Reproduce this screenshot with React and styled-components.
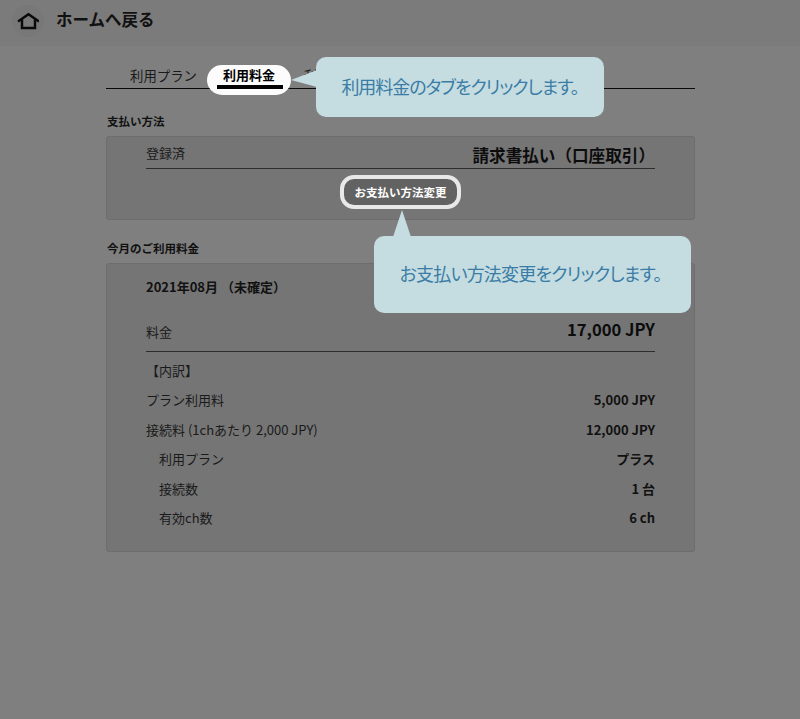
import React from "react";
import styled, { createGlobalStyle } from "styled-components";

const Global = createGlobalStyle`
  html, body { margin: 0; padding: 0; background: #7f7f7f; }
  body { font-family: "Noto Sans CJK JP", "Noto Sans", sans-serif; color: #0c0c0c; }
  #root { min-height: 719px; }
`;

const Page = styled.div`
  position: relative;
  width: 800px;
  height: 719px;
  overflow: hidden;
  background: #7f7f7f;
`;

const Header = styled.header`
  height: 46px;
  display: flex;
  align-items: center;
  padding: 0 0 5px 12px;
  gap: 12px;
  background: #7b7b7b;
  box-sizing: border-box;
`;

const HomeButton = styled.div`
  width: 32px;
  height: 32px;
  border-radius: 50%;
  background: #787878;
  display: flex;
  align-items: center;
  justify-content: center;
`;

const HeaderTitle = styled.span`
  font-size: 16.5px;
  font-weight: 700;
  color: #111;
  line-height: 20px;
  margin-top: -3px;
`;

const Main = styled.main`
  width: 589px;
  margin: 0 0 0 106px;
`;

const Tabs = styled.nav`
  height: 42px;
  border-bottom: 1px solid #0a0a0a;
  display: flex;
  align-items: flex-start;
  padding-left: 24px;
`;

const Tab = styled.div`
  position: relative;
  font-size: ${(p) => (p.$active ? 13 : 13.4)}px;
  line-height: 20px;
  margin-top: 19px;
  margin-left: ${(p) => p.$gap || 0}px;
  width: ${(p) => p.$w}px;
  flex: none;
  text-align: ${(p) => (p.$active ? "center" : "left")};
  font-weight: ${(p) => (p.$active ? 700 : 400)};
  color: ${(p) => (p.$active ? "#000" : "#1a1a1a")};
  z-index: ${(p) => (p.$active ? 1 : 0)};
  &::before {
    content: ${(p) => (p.$active ? '""' : "none")};
    position: absolute;
    inset: 0 0 -10px 0;
    border-radius: 15px;
    background: #fcfcfc;
    z-index: -1;
  }
  &::after {
    content: ${(p) => (p.$active ? '""' : "none")};
    position: absolute;
    left: 10px;
    right: 8px;
    top: 20px;
    height: 4px;
    background: #000;
  }
`;

const SectionTitle = styled.h2`
  margin: 0;
  font-size: 11.5px;
  font-weight: 700;
  line-height: 16px;
  color: #111;
  padding-left: 1px;
  padding-top: ${(p) => p.$top}px;
  padding-bottom: ${(p) => p.$bottom}px;
`;

const Card = styled.section`
  background: #757575;
  border: 1px solid #6d6d6d;
  border-radius: 3px;
  box-sizing: border-box;
  height: ${(p) => p.$h}px;
  padding: 0 39px;
`;

const MethodRow = styled.div`
  height: 31px;
  display: flex;
  justify-content: space-between;
  align-items: center;
  border-bottom: 1px solid #2d2d2d;
`;

const Label = styled.span`
  font-size: 13px;
  color: #1a1a1a;
  padding-left: ${(p) => (p.$indent ? 13 : 0)}px;
  margin-top: ${(p) => p.$shift || 0}px;
`;

const MethodValue = styled.strong`
  font-size: 16.6px;
  font-weight: 700;
  color: #0c0c0c;
  margin-top: 4px;
`;

const ButtonRow = styled.div`
  display: flex;
  justify-content: center;
  padding-top: 6px;
`;

const ChangeButton = styled.button`
  width: 121px;
  height: 34px;
  box-sizing: border-box;
  border: 4px solid #e8e8e8;
  border-radius: 14px;
  background: #626262;
  color: #fff;
  font-family: inherit;
  font-size: 11.5px;
  font-weight: 700;
  padding: 0;
`;

const Period = styled.div`
  font-size: 13px;
  font-weight: 700;
  line-height: 20px;
  padding-top: 13px;
  color: #111;
`;

const TotalRow = styled.div`
  display: flex;
  justify-content: space-between;
  align-items: center;
  height: 45px;
  margin-top: 10px;
  border-bottom: 1px solid #2d2d2d;
  box-sizing: border-box;
`;

const TotalValue = styled.strong`
  font-size: 16.6px;
  font-weight: 700;
  color: #0c0c0c;
`;

const Breakdown = styled.div`
  font-size: 13px;
  line-height: 18px;
  color: #1a1a1a;
  padding: 4px 0 8px;
`;

const Row = styled.div`
  display: flex;
  justify-content: space-between;
  align-items: center;
  height: 29.5px;
`;

const Value = styled.span`
  font-size: 13px;
  font-weight: 700;
  color: #111;
`;

const Callout = styled.div`
  position: absolute;
  left: ${(p) => p.$x}px;
  top: ${(p) => p.$y}px;
  width: ${(p) => p.$w}px;
  height: ${(p) => p.$h}px;
  background: #c5dce1;
  border-radius: 10px;
  display: flex;
  align-items: center;
  justify-content: center;
  color: #3a7ca5;
  font-size: 18px;
  letter-spacing: ${(p) => p.$ls}px;
  font-feature-settings: "palt";
  white-space: nowrap;
  padding-bottom: ${(p) => p.$pb}px;
  padding-right: ${(p) => p.$pr || 0}px;
  box-sizing: border-box;
  z-index: 5;
`;

const Pointer = styled.svg`
  position: absolute;
  left: ${(p) => p.$x}px;
  top: ${(p) => p.$y}px;
  z-index: 5;
`;

export default function App() {
  return (
    <Page>
      <Global />
      <Header>
        <HomeButton>
          <svg width="22" height="20" viewBox="0 0 22 20" fill="none" stroke="#0a0a0a" strokeWidth="2.5">
            <path d="M1 10.5 L11.5 3.2 L22 10.5" />
            <path d="M5 8.5 V17 H18 V8.5" />
          </svg>
        </HomeButton>
        <HeaderTitle>ホームへ戻る</HeaderTitle>
      </Header>
      <Main>
        <Tabs>
          <Tab $w={77}>利用プラン</Tab>
          <Tab $active $w={84}>利用料金</Tab>
          <Tab $w={80} $gap={13}>利用履歴</Tab>
        </Tabs>
        <SectionTitle $top={24} $bottom={7}>支払い方法</SectionTitle>
        <Card $h={84}>
          <MethodRow>
            <Label>登録済</Label>
            <MethodValue>請求書払い（口座取引）</MethodValue>
          </MethodRow>
          <ButtonRow>
            <ChangeButton>お支払い方法変更</ChangeButton>
          </ButtonRow>
        </Card>
        <SectionTitle $top={20} $bottom={7}>今月のご利用料金</SectionTitle>
        <Card $h={289}>
          <Period>2021年08月 （未確定）</Period>
          <TotalRow>
            <Label $shift={4}>料金</Label>
            <TotalValue>17,000 JPY</TotalValue>
          </TotalRow>
          <Breakdown>
            <Row><span>【内訳】</span></Row>
            <Row><span>プラン利用料</span><Value>5,000 JPY</Value></Row>
            <Row><span>接続料 (1chあたり 2,000 JPY)</span><Value>12,000 JPY</Value></Row>
            <Row><Label $indent>利用プラン</Label><Value>プラス</Value></Row>
            <Row><Label $indent>接続数</Label><Value>1 台</Value></Row>
            <Row><Label $indent>有効ch数</Label><Value>6 ch</Value></Row>
          </Breakdown>
        </Card>
      </Main>
      <Pointer $x={289} $y={70} width="28" height="20" viewBox="0 0 28 20">
        <path d="M2 10 L28 0 V17 Z" fill="#c5dce1" />
      </Pointer>
      <Callout $x={316} $y={57} $w={288} $h={60} $ls={-1.05} $pb={2}>利用料金のタブをクリックします。</Callout>
      <Pointer $x={391} $y={210} width="22" height="27" viewBox="0 0 22 27">
        <path d="M11 0 L20 27 H2 Z" fill="#c5dce1" />
      </Pointer>
      <Callout $x={374} $y={236} $w={317} $h={77} $ls={-0.8} $pb={4} $pr={4}>お支払い方法変更をクリックします。</Callout>
    </Page>
  );
}
